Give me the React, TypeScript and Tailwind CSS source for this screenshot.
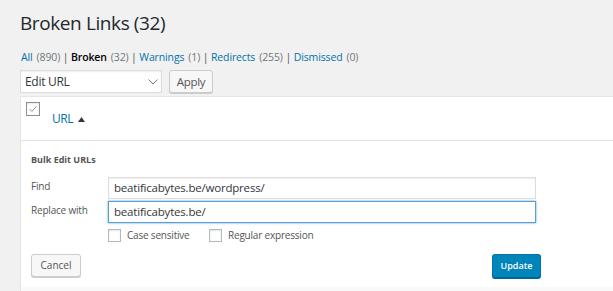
import React from "react";

function Count({ n }: { n: string }) {
  return <span className="ml-[4px] text-[#72777c]">({n})</span>;
}

function Sep() {
  return <span className="text-[#555]"> | </span>;
}

function CheckBox() {
  return (
    <span className="block w-[13px] h-[13px] border border-[#b4b9be] bg-white shadow-[inset_0_1px_2px_rgba(0,0,0,0.1)]" />
  );
}

export default function App() {
  return (
    <div className="w-full h-[291px] overflow-hidden bg-[#f1f1f1] pl-[20px] pt-[10px] font-['Open_Sans',sans-serif]">
      <h1 className="text-[19px] leading-[26px] tracking-[-0.4px] text-[#23282d] font-normal">
        Broken Links (32)
      </h1>

      <div className="mt-[13px] h-[16px] leading-[16px] text-[10.5px] tracking-[-0.13px] whitespace-pre flex items-baseline pl-[1px]">
        <span className="text-[#0073aa]">All</span>
        <Count n="890" />
        <Sep />
        <span className="text-black font-semibold">Broken</span>
        <Count n="32" />
        <Sep />
        <span className="text-[#0073aa]">Warnings</span>
        <Count n="1" />
        <Sep />
        <span className="text-[#0073aa]">Redirects</span>
        <Count n="255" />
        <Sep />
        <span className="text-[#0073aa]">Dismissed</span>
        <Count n="0" />
      </div>

      <div className="mt-[5px] flex items-start h-[24px]">
        <div className="relative w-[142px] h-[23px] bg-white border border-[#ddd] shadow-[inset_0_1px_2px_rgba(0,0,0,0.07)] flex items-center pl-[4px] text-[12px] tracking-[-0.3px] text-[#32373c]">
          Edit URL
          <svg
            className="absolute left-[127px] top-[8px]"
            width="10"
            height="6"
            viewBox="0 0 10 6"
          >
            <path d="M0.5 0.5 L5 5 L9.5 0.5" fill="none" stroke="#777" strokeWidth="1" />
          </svg>
        </div>
        <button className="ml-[7px] w-[44px] h-[23px] bg-[#f7f7f7] border border-[#ccc] rounded-[3px] shadow-[0_1px_0_#ccc] text-[11.5px] tracking-[-0.3px] text-[#555] flex items-center justify-center">
          Apply
        </button>
      </div>

      <div className="mt-[2px] bg-white border-t border-l border-[#e5e5e5] -mr-[4px]">
        <div className="h-[44px] border-b border-[#e1e1e1] flex items-start">
          <div className="ml-[5px] mt-[5px] w-[14px] h-[14px] border-[1.5px] border-[#8c8f94] bg-white relative shadow-[inset_0_1px_2px_rgba(0,0,0,0.1)]">
            <svg className="absolute left-[1px] top-[1px]" width="10" height="10" viewBox="0 0 10 10">
              <path d="M1.5 5 L4 7.5 L8.5 2" fill="none" stroke="#a0928c" strokeWidth="1" />
            </svg>
          </div>
          <div className="ml-[12px] mt-[14px] flex items-center h-[16px]">
            <span className="text-[12px] leading-[16px] tracking-[-0.5px] text-[#0073aa]">URL</span>
            <svg className="ml-[5px]" width="7" height="5" viewBox="0 0 7 5">
              <path d="M0 5 L3.5 0 L7 5 Z" fill="#32373c" />
            </svg>
          </div>
        </div>

        <div className="pl-[10px] pt-[13px] pb-[9px]">
          <div className="text-[9px] leading-[12px] font-bold text-[#555]">Bulk Edit URLs</div>

          <div className="mt-[11px] flex items-start">
            <div className="w-[77px] h-[22px] leading-[18px] text-[10px] tracking-[-0.2px] text-[#555]">Find</div>
            <div className="w-[428px] h-[22px] border border-[#ddd] bg-white shadow-[inset_0_1px_2px_rgba(0,0,0,0.07)] flex items-center pl-[5px] text-[11.5px] tracking-[-0.2px] text-[#32373c]">
              beatificabytes.be/wordpress/
            </div>
          </div>

          <div className="mt-[2px] flex items-start">
            <div className="w-[77px] h-[22px] leading-[18px] text-[10px] tracking-[-0.2px] text-[#555]">Replace with</div>
            <div className="w-[428px] h-[22px] border border-[#5b9dd9] bg-white shadow-[0_0_2px_rgba(30,140,190,0.8)] flex items-center pl-[5px] text-[11.5px] tracking-[-0.2px] text-[#32373c]">
              beatificabytes.be/
            </div>
          </div>

          <div className="mt-[6px] ml-[77px] flex items-center h-[13px] text-[10px] leading-[13px] tracking-[-0.2px] text-[#555]">
            <CheckBox />
            <span className="ml-[6px] w-[82px]">Case sensitive</span>
            <CheckBox />
            <span className="ml-[6px]">Regular expression</span>
          </div>

          <div className="mt-[12px] w-[510px] flex justify-between items-start">
            <button className="w-[50px] h-[23px] bg-[#f7f7f7] border border-[#ccc] rounded-[3px] shadow-[0_1px_0_#ccc] text-[10px] text-[#555] flex items-center justify-center">
              Cancel
            </button>
            <button className="w-[49px] h-[24px] bg-[#0085ba] border border-[#0073aa] border-b-[#006799] rounded-[3px] shadow-[0_1px_0_#006799] text-[9px] font-semibold text-white flex items-center justify-center">
              Update
            </button>
          </div>
        </div>
        <div className="h-[10px] bg-[#f9f9f9]" />
      </div>
    </div>
  );
}
